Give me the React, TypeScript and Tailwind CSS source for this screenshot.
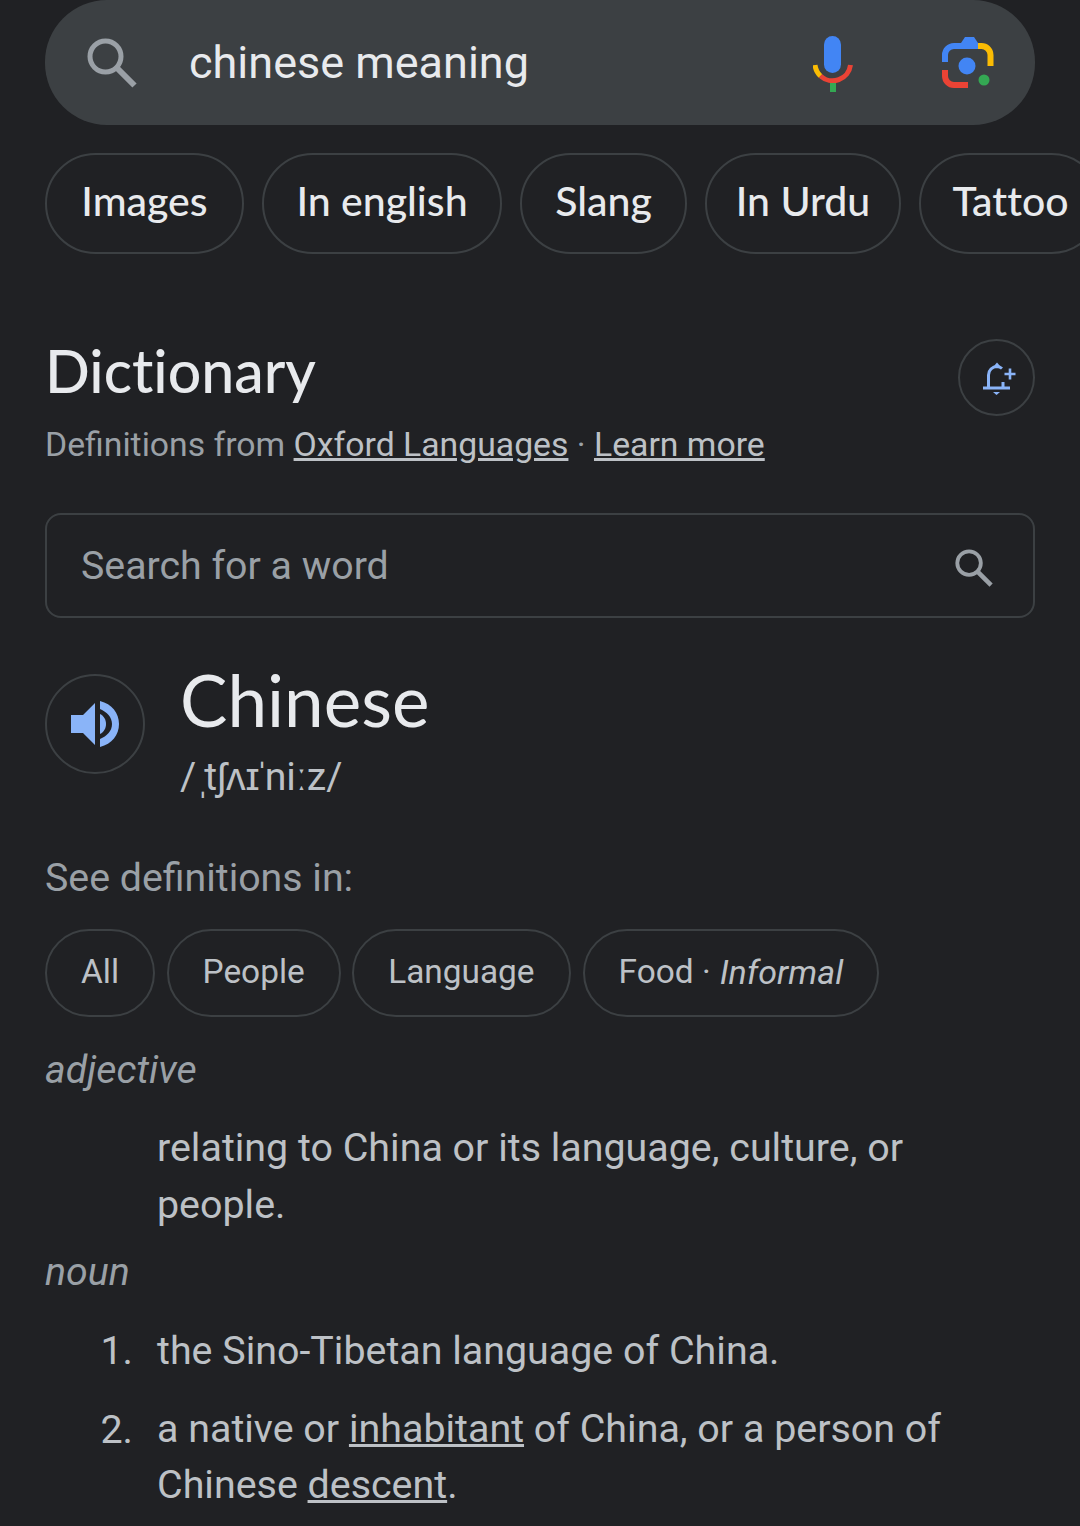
const chips = [
  { label: "Images", w: "w-[199px]" },
  { label: "In english", w: "w-[240px]" },
  { label: "Slang", w: "w-[167px]" },
  { label: "In Urdu", w: "w-[196px]" },
  { label: "Tattoo", w: "w-[183px]" },
];

function SearchIcon({ className }: { className: string }) {
  return (
    <svg viewBox="0 0 50 50" className={className} fill="none" stroke="currentColor">
      <circle cx="18.500" cy="18.500" r="15.500" strokeWidth="5" />
      <path d="M30 30 L47.500 47.500" strokeWidth="6" />
    </svg>
  );
}

function MicIcon() {
  return (
    <svg viewBox="0 0 40 58" className="w-10 h-[58px] mt-[4px]" fill="none">
      <rect x="11" y="0" width="17" height="37" rx="8.5" fill="#4285f4" />
      <path d="M2 29 A18 18 0 0 0 7.5 40" stroke="#fbbc04" strokeWidth="5" />
      <path d="M7.5 40 A18 18 0 0 0 37.5 29" stroke="#ea4335" strokeWidth="5" />
      <rect x="17" y="47" width="6" height="9" fill="#34a853" />
    </svg>
  );
}

function LensIcon() {
  return (
    <svg viewBox="0 0 52 54" className="w-[52px] h-[54px] mt-[3px]" fill="none">
      <path d="M15 12 L23 0 H32 L38 9 V12 Z" fill="#4285f4" />
      <path d="M3 25 V18 A9 9 0 0 1 12 9 H36" stroke="#4285f4" strokeWidth="6" />
      <path d="M36 9 H39 A9 9 0 0 1 48.500 18 V29" stroke="#fbbc04" strokeWidth="6" />
      <path d="M3 33 V39 A9 9 0 0 0 12 48 H26" stroke="#ea4335" strokeWidth="6" />
      <circle cx="25" cy="29" r="8.500" fill="#4285f4" />
      <circle cx="42" cy="43" r="5.500" fill="#34a853" />
    </svg>
  );
}

function BellPlus() {
  return (
    <svg viewBox="0 0 38 36" className="w-[38px] h-9" fill="none" stroke="#8ab4f8">
      <path d="M10.500 27 V15 A8.500 8.500 0 0 1 19 6.500 A8 8 0 0 1 24 8.500" strokeWidth="3" />
      <path d="M16 6 L19 2.500 L22 6 Z" fill="#8ab4f8" stroke="none" />
      <path d="M5 28 H32" strokeWidth="3" />
      <path d="M25 28 V22" strokeWidth="3" />
      <path d="M15 32 H22 L18.500 35 Z" fill="#8ab4f8" stroke="none" />
      <path d="M26.500 14 H37.500 M32 8.500 V19.500" strokeWidth="2.600" />
    </svg>
  );
}

function SpeakerIcon() {
  return (
    <svg viewBox="0 0 48 46" className="w-12 h-[46px]" fill="#8ab4f8">
      <path d="M0 14 H12 L24 2 V44 L12 32 H0 Z" />
      <path d="M29 0 C41 3 48 12 48 23 C48 34 41 43 29 46 V38 C36 35 41 30 41 23 C41 16 36 11 29 8 Z" />
      <path d="M29 13 C33 15 35 19 35 23 C35 27 33 31 29 33 Z" />
    </svg>
  );
}

function SmallChip({ children }: { children: React.ReactNode }) {
  return (
    <div className="h-[88px] px-[34px] pb-[2px] flex items-center rounded-full border-2 border-[#3c4043] text-[33.4px] text-[#bdc1c6] whitespace-nowrap">
      {children}
    </div>
  );
}

export default function App() {
  return (
    <div className="w-[1080px] h-[1526px] overflow-hidden bg-[#202124] font-['Roboto',sans-serif] text-[#bdc1c6]">
      <div className="mx-[45px] h-[125px] rounded-[62px] bg-[#3c4043] flex items-center pl-[42px] pr-[41px]">
        <SearchIcon className="w-[50px] h-[50px] text-[#9aa0a6]" />
        <div className="ml-[52px] flex-1 text-[45px] text-[#e8eaed]">chinese meaning</div>
        <MicIcon />
        <div className="ml-[89px]"><LensIcon /></div>
      </div>

      <div className="mt-[28px] ml-[45px] flex gap-[18px]">
        {chips.map((chip) => (
          <div
            key={chip.label}
            className={`${chip.w} shrink-0 h-[101px] rounded-full border-2 border-[#3c4043] flex items-center justify-center pb-[6px] text-[41px] font-medium text-[#e8eaed] font-['Lato',sans-serif] [font-variant-ligatures:none] whitespace-nowrap`}
          >
            {chip.label}
          </div>
        ))}
      </div>

      <div className="mx-[45px]">
        <div className="mt-[85px] flex items-start justify-between">
          <div className="-mt-[4px] text-[59px] leading-[72px] font-medium text-[#e8eaed] font-['Lato',sans-serif] [font-variant-ligatures:none]">Dictionary</div>
          <div className="w-[77px] h-[77px] rounded-full border-2 border-[#3c4043] flex items-center justify-center">
            <BellPlus />
          </div>
        </div>
        <div className="mt-[7px] text-[33.75px] leading-[44px] text-[#9aa0a6]">
          Definitions from <span className="underline text-[#bdc1c6]">Oxford Languages</span> · <span className="underline text-[#bdc1c6]">Learn more</span>
        </div>

        <div className="mt-[46px] h-[105px] rounded-[16px] border-2 border-[#3c4043] flex items-center justify-between pl-[34px] pr-[40px]">
          <span className="mt-[2px] text-[39.3px] text-[#9aa0a6]">Search for a word</span>
          <SearchIcon className="mt-[4px] w-[38px] h-[38px] text-[#9aa0a6]" />
        </div>

        <div className="mt-[46px] flex">
          <div className="mt-[10px] w-[100px] h-[100px] rounded-full border-2 border-[#3c4043] flex items-center justify-center">
            <SpeakerIcon />
          </div>
          <div className="ml-[35px]">
            <div className="-mt-[6px] text-[71px] leading-[84px] text-[#e8eaed] font-['Lato',sans-serif]">Chinese</div>
            <div className="text-[39.3px] leading-[48px] mt-[11px] text-[#bdc1c6]">
              /<span className="-mr-[5px]">ˌ</span>tʃʌɪ<span className="-mx-[4px]">ˈ</span>niːz/
            </div>
          </div>
        </div>

        <div className="mt-[53px] text-[39.3px] leading-[48px] text-[#9aa0a6]">See definitions in:</div>

        <div className="mt-[27px] flex gap-[12px]">
          <SmallChip>All</SmallChip>
          <div className="-ml-[0.5px]"><SmallChip>People</SmallChip></div>
          <div className="-ml-[0.5px]"><SmallChip>Language</SmallChip></div>
          <SmallChip>Food · <span className="italic ml-[9px] text-[34px]">Informal</span></SmallChip>
        </div>

        <div className="mt-[29px] text-[39.3px] leading-[48px] italic text-[#9aa0a6]">adjective</div>
        <div className="mt-[25px] ml-[112px] text-[39.4px] leading-[57px]">relating to China or its language, culture, or people.</div>
        <div className="mt-[15px] text-[39.3px] leading-[48px] italic text-[#9aa0a6]">noun</div>

        <div className="mt-[26px] flex">
          <div className="w-[112px] pr-[24px] text-right text-[39.4px] leading-[57px]">1.</div>
          <div className="flex-1 text-[39.4px] leading-[57px]">the Sino-Tibetan language of China.</div>
        </div>
        <div className="mt-[22px] flex">
          <div className="w-[112px] pr-[24px] text-right text-[39.4px] leading-[57px]">2.</div>
          <div className="flex-1 text-[39.4px] leading-[56px]">
            a native or <span className="underline">inhabitant</span> of China, or a person of Chinese <span className="underline">descent</span>.
          </div>
        </div>
      </div>
    </div>
  );
}
